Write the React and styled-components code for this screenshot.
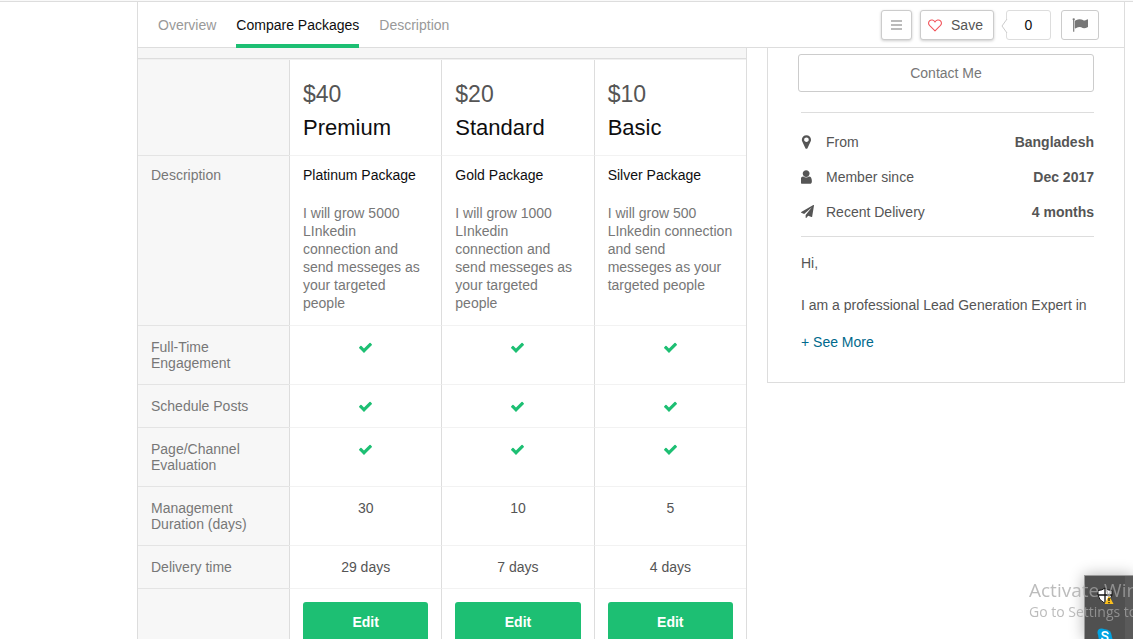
import React from "react";
import styled, { createGlobalStyle } from "styled-components";

const line = "#dddddd";
const green = "#1dbf73";

const GlobalStyle = createGlobalStyle`
  * { box-sizing: border-box; }
  body {
    margin: 0;
    background: #fff;
    color: #555;
    font-family: "Liberation Sans", Arial, sans-serif;
    font-size: 14px;
    line-height: 16px;
  }
  button { font: inherit; cursor: pointer; }
  a { text-decoration: none; }
`;

const Page = styled.div`
  height: 100vh;
  overflow: hidden;
`;

const TopStrip = styled.div`
  height: 2px;
  background: #f9f9f9;
  border-bottom: 1px solid ${line};
`;

const Container = styled.div`
  margin: 0 8px 0 137px;
`;

const Nav = styled.nav`
  display: flex;
  align-items: stretch;
  justify-content: space-between;
  height: 46px;
  padding: 0 25px 0 20px;
  border: 1px solid ${line};
  border-top: 0;
`;

const Tabs = styled.div`
  display: flex;
  gap: 20px;
`;

const Tab = styled.a`
  height: 46px;
  line-height: 46px;
  color: ${(p) => (p.$active ? "#0e0e0f" : "#999")};
  border-bottom: 4px solid ${(p) => (p.$active ? green : "transparent")};
`;

const Actions = styled.div`
  display: flex;
  align-items: flex-start;
  padding-top: 8px;
`;

const ActionButton = styled.button`
  display: flex;
  align-items: center;
  justify-content: center;
  gap: 9px;
  width: ${(p) => p.$width}px;
  height: 30px;
  margin-left: ${(p) => p.$gap}px;
  padding: 0;
  color: #555;
  background: #fff;
  border: 1px solid #ccc;
  border-radius: 3px;
  box-shadow: ${(p) => (p.$raised ? "0 1px 3px rgba(0, 0, 0, 0.2)" : "none")};
`;

const SaveButton = styled(ActionButton)`
  padding-right: 3px;
`;

const Count = styled.span`
  position: relative;
  width: 45px;
  height: 30px;
  margin-left: 12px;
  line-height: 28px;
  text-align: center;
  color: #0e0e0f;
  border: 1px solid ${line};
  border-radius: 3px;
`;

const Pointer = styled.svg`
  position: absolute;
  left: -6px;
  top: 8px;
`;

const Columns = styled.div`
  display: grid;
  grid-template-columns: minmax(0, 1fr) 358px;
  gap: 20px;
  align-items: start;
`;

const Packages = styled.main`
  border: 1px solid ${line};
  border-top: 0;
`;

const TitleStrip = styled.div`
  height: 12px;
  background: #f6f6f6;
  border-bottom: 1px solid #f0f0f0;
  box-shadow: inset 0 -1px 0 ${line};
`;

const Table = styled.table`
  width: 100%;
  table-layout: fixed;
  border-spacing: 0;
`;

const LabelCol = styled.col`
  width: 151px;
`;

const HeadCell = styled.th`
  height: 96px;
  padding: 17px 13px 10px;
  text-align: left;
  vertical-align: top;
  font-weight: 400;
  border-bottom: 1px solid #f2f2f2;
  border-left: 1px solid ${line};
`;

const Price = styled.div`
  font-size: 23px;
  line-height: 34px;
  color: #555;
`;

const PackageName = styled.div`
  font-size: 22px;
  line-height: 34px;
  color: #0e0e0f;
`;

const LabelCell = styled.th`
  padding: ${(p) => (p.$top ? 11 : 13)}px 13px 13px;
  text-align: left;
  vertical-align: top;
  font-weight: 400;
  color: #777;
  background: #f7f7f7;
  border-bottom: 1px solid #e4e4e4;
`;

const Cell = styled.td`
  padding: 13px;
  text-align: center;
  vertical-align: top;
  border-bottom: 1px solid #f2f2f2;
  border-left: 1px solid ${line};
`;

const SummaryCell = styled(Cell)`
  padding-top: 11px;
  text-align: left;
`;

const SummaryTitle = styled.div`
  margin-bottom: 21px;
  color: #0e0e0f;
`;

const SummaryText = styled.p`
  margin: 0;
  line-height: 18px;
  color: #777;
  white-space: pre;
`;

const EditButton = styled.button`
  display: block;
  width: 100%;
  height: 40px;
  padding: 0;
  color: #fff;
  font-weight: 700;
  background: ${green};
  border: 0;
  border-radius: 3px;
`;

const Seller = styled.aside`
  padding: 6px 30px 32px;
  border: 1px solid ${line};
  border-top: 0;
`;

const ContactButton = styled.button`
  width: 100%;
  height: 38px;
  padding: 0;
  color: #777;
  background: #fff;
  border: 1px solid #ccc;
  border-radius: 3px;
`;

const Facts = styled.dl`
  margin: 20px 0 0 3px;
  padding: 11px 0 7px;
  border: solid ${line};
  border-width: 1px 0;
`;

const Fact = styled.div`
  display: flex;
  align-items: center;
  height: 35px;

  dt {
    display: flex;
    align-items: center;
    flex: 1;
  }
  dd {
    margin: 0;
    font-weight: 700;
  }
`;

const FactIcon = styled.span`
  display: flex;
  width: 25px;
`;

const Bio = styled.div`
  margin-left: 3px;
  padding-top: 18px;

  p {
    margin: 0;
    line-height: 16px;
    white-space: nowrap;
  }
  p + p { margin-top: 26px; }
`;

const MoreLink = styled.a`
  display: inline-block;
  margin-top: 21px;
  color: #00698c;
`;

const Tray = styled.div`
  position: fixed;
  right: 0;
  bottom: 0;
  width: 49px;
  height: 64px;
  padding: 11px 12px 0;
  background: linear-gradient(to right, #505050 40px, #5a5a5a 40px);
  border: 1px solid #999;
  border-width: 1px 0 0 1px;
  box-shadow: 0 0 14px rgba(0, 0, 0, 0.3);

  svg { display: block; }
  svg + svg { margin-top: 23px; }
`;

const Watermark = styled.div`
  position: fixed;
  left: calc(100% - 104px);
  bottom: 17px;
  color: rgba(165, 165, 165, 0.75);
  font-family: "Open Sans", sans-serif;
  white-space: nowrap;
`;

const WatermarkTitle = styled.div`
  font-size: 19px;
  line-height: 24px;
`;

const WatermarkText = styled.div`
  font-size: 14px;
  line-height: 20px;
`;

const paths = {
  check:
    "M1671 566q0 40-28 68l-724 724-136 136q-28 28-68 28t-68-28l-136-136-362-362q-28-28-28-68t28-68l136-136q28-28 68-28t68 28l294 295 656-657q28-28 68-28t68 28l136 136q28 28 28 68z",
  marker:
    "M1152 640q0-106-75-181t-181-75-181 75-75 181 75 181 181 75 181-75 75-181zm256 0q0 109-33 179l-364 774q-16 33-47.5 52t-67.5 19-67.5-19-46.5-52l-365-774q-33-70-33-179 0-212 150-362t362-150 362 150 150 362z",
  user:
    "M1536 1399q0 109-62.5 187t-150.5 78h-854q-88 0-150.5-78t-62.5-187q0-85 8.5-160.5t31.5-152 58.5-131 94-89 134.5-34.5q131 128 313 128t313-128q76 0 134.5 34.5t94 89 58.5 131 31.5 152 8.5 160.5zm-256-887q0 159-112.5 271.5t-271.5 112.5-271.5-112.5-112.5-271.5 112.5-271.5 271.5-112.5 271.5 112.5 112.5 271.5z",
  plane:
    "M1764 11q33 24 27 64l-256 1536q-5 29-32 45-14 8-31 8-11 0-24-5l-453-185-242 295q-18 23-49 23-13 0-22-4-19-7-30.5-23.5t-11.5-36.5v-349l864-1059-1069 925-395-162q-37-14-40-55-2-40 32-59l1664-960q15-9 32-9 20 0 36 11z",
  flag:
    "M320 256q0 72-64 110v1266q0 13-9.5 22.5t-22.5 9.5h-64q-13 0-22.5-9.5t-9.5-22.5v-1266q-64-38-64-110 0-53 37.5-90.5t90.5-37.5 90.5 37.5 37.5 90.5zm1472 64v763q0 25-12.5 38.5t-39.5 27.5q-215 116-369 116-61 0-123.5-22t-108.5-48-115.5-48-142.5-22q-192 0-464 146-17 9-33 9-26 0-45-19t-19-45v-742q0-32 31-55 21-14 79-43 236-120 421-120 107 0 200 29t219 88q38 19 88 19 54 0 117.5-21t110-47 88-47 54.5-21q26 0 45 19t19 45z",
};

const Icon = ({ name, size = 15, color = "#555", box = "0 0 1792 1792" }) => (
  <svg width={size} height={size} viewBox={box} fill={color} aria-hidden="true">
    <path d={paths[name]} />
  </svg>
);

const CheckSlot = styled.span`
  display: flex;
  align-items: center;
  justify-content: center;
  height: 16px;
`;

const packages = [
  {
    price: "$40",
    name: "Premium",
    title: "Platinum Package",
    text: "I will grow 5000\nLInkedin\nconnection and\nsend messeges as\nyour targeted\npeople",
  },
  {
    price: "$20",
    name: "Standard",
    title: "Gold Package",
    text: "I will grow 1000\nLInkedin\nconnection and\nsend messeges as\nyour targeted\npeople",
  },
  {
    price: "$10",
    name: "Basic",
    title: "Silver Package",
    text: "I will grow 500\nLInkedin connection\nand send\nmesseges as your\ntargeted people",
  },
];

const rows = [
  { label: "Full-Time Engagement", values: [true, true, true] },
  { label: "Schedule Posts", values: [true, true, true] },
  { label: "Page/Channel Evaluation", values: [true, true, true] },
  { label: "Management Duration (days)", values: ["30", "10", "5"] },
  { label: "Delivery time", values: ["29 days", "7 days", "4 days"] },
];

const facts = [
  { icon: "marker", size: 16, box: "288 0 1792 1792", label: "From", value: "Bangladesh" },
  { icon: "user", size: 16, box: "320 0 1792 1792", label: "Member since", value: "Dec 2017" },
  { icon: "plane", size: 13, label: "Recent Delivery", value: "4 months" },
];

export default function App() {
  return (
    <Page>
      <GlobalStyle />
      <TopStrip />
      <Container>
        <Nav>
          <Tabs>
            <Tab href="#overview">Overview</Tab>
            <Tab href="#packages" $active>Compare Packages</Tab>
            <Tab href="#description">Description</Tab>
          </Tabs>
          <Actions>
            <ActionButton $width={31} $gap={0} $raised aria-label="Lists">
              <svg width="11" height="12" viewBox="0 0 11 12" stroke="#bbb" strokeWidth="2" aria-hidden="true">
                <path d="M0 2h11M0 6h11M0 10h11" />
              </svg>
            </ActionButton>
            <SaveButton $width={74} $gap={8} $raised>
              <svg width="14" height="13" viewBox="0 0 16 14" fill="none" stroke="#f2545b" strokeWidth="1.2" aria-hidden="true">
                <path d="M8 13.2 2 7.2C.4 5.5.5 3.2 1.7 1.800 3.500 0 6.500.5 8 3.100 9.500.5 12.500 0 14.300 1.800 15.500 3.200 15.600 5.500 14 7.200Z" strokeLinejoin="round" />
              </svg>
              Save
            </SaveButton>
            <Count>
              <Pointer width="7" height="14" viewBox="0 0 7 14" aria-hidden="true">
                <path d="M6 0 1 7l5 7h1V0Z" fill="#fff" />
                <path d="M6 0 1 7l5 7" fill="none" stroke="#ccc" />
              </Pointer>
              0
            </Count>
            <ActionButton $width={38} $gap={10} aria-label="Report">
              <Icon name="flag" size={16} color="#777" />
            </ActionButton>
          </Actions>
        </Nav>
        <Columns>
          <Packages>
            <TitleStrip />
            <Table>
              <colgroup>
                <LabelCol />
                <col />
                <col />
                <col />
              </colgroup>
              <thead>
                <tr>
                  <LabelCell as="td" />
                  {packages.map((p) => (
                    <HeadCell key={p.name} scope="col">
                      <Price>{p.price}</Price>
                      <PackageName>{p.name}</PackageName>
                    </HeadCell>
                  ))}
                </tr>
              </thead>
              <tbody>
                <tr>
                  <LabelCell scope="row" $top>Description</LabelCell>
                  {packages.map((p) => (
                    <SummaryCell key={p.name}>
                      <SummaryTitle>{p.title}</SummaryTitle>
                      <SummaryText>{p.text}</SummaryText>
                    </SummaryCell>
                  ))}
                </tr>
                {rows.map((row) => (
                  <tr key={row.label}>
                    <LabelCell scope="row">{row.label}</LabelCell>
                    {row.values.map((value, i) => (
                      <Cell key={packages[i].name}>
                        {value === true ? (
                          <CheckSlot role="img" aria-label="Included">
                            <Icon name="check" color={green} />
                          </CheckSlot>
                        ) : (
                          value
                        )}
                      </Cell>
                    ))}
                  </tr>
                ))}
                <tr>
                  <LabelCell as="td" />
                  {packages.map((p) => (
                    <Cell key={p.name}>
                      <EditButton>Edit</EditButton>
                    </Cell>
                  ))}
                </tr>
              </tbody>
            </Table>
          </Packages>
          <Seller>
            <ContactButton>Contact Me</ContactButton>
            <Facts>
              {facts.map((f) => (
                <Fact key={f.label}>
                  <dt>
                    <FactIcon>
                      <Icon name={f.icon} size={f.size} box={f.box} />
                    </FactIcon>
                    {f.label}
                  </dt>
                  <dd>{f.value}</dd>
                </Fact>
              ))}
            </Facts>
            <Bio>
              <p>Hi,</p>
              <p>I am a professional Lead Generation Expert in</p>
              <MoreLink href="#more">+ See More</MoreLink>
            </Bio>
          </Seller>
        </Columns>
      </Container>
      <Tray>
        <svg width="17" height="18" viewBox="0 0 17 18" aria-hidden="true">
          <path d="M8 1Q11 3.500 15 3.500V8Q14.500 13 8 16.500 1.500 13 1 8V3.500Q5 3.500 8 1Z" fill="#fff" stroke="#111" />
          <path d="M8 1V16M1 8H15" stroke="#111" strokeWidth="1.300" />
          <path d="M12 8.500 16.500 17H7.500Z" fill="#fbbf1c" />
          <path d="M12 11v3M12 15v1.200" stroke="#111" strokeWidth="1.300" />
        </svg>
        <svg width="16" height="16" viewBox="0 0 16 16" aria-hidden="true">
          <circle cx="8" cy="8" r="6.800" fill="#00a4e4" />
          <circle cx="4.500" cy="4.500" r="4" fill="#00a4e4" />
          <circle cx="11.500" cy="11.500" r="4" fill="#00a4e4" />
          <path d="M11 5.500Q10.300 3.900 8 3.900 5.400 3.900 5.400 5.800 5.400 7.300 8 7.900 10.800 8.500 10.800 10.200 10.800 12.100 8.100 12.100 5.600 12.100 5 10.400" fill="none" stroke="#fff" strokeWidth="1.700" strokeLinecap="round" />
        </svg>
      </Tray>
      <Watermark>
        <WatermarkTitle>Activate Windows</WatermarkTitle>
        <WatermarkText>Go to Settings to activate Windows.</WatermarkText>
      </Watermark>
    </Page>
  );
}
